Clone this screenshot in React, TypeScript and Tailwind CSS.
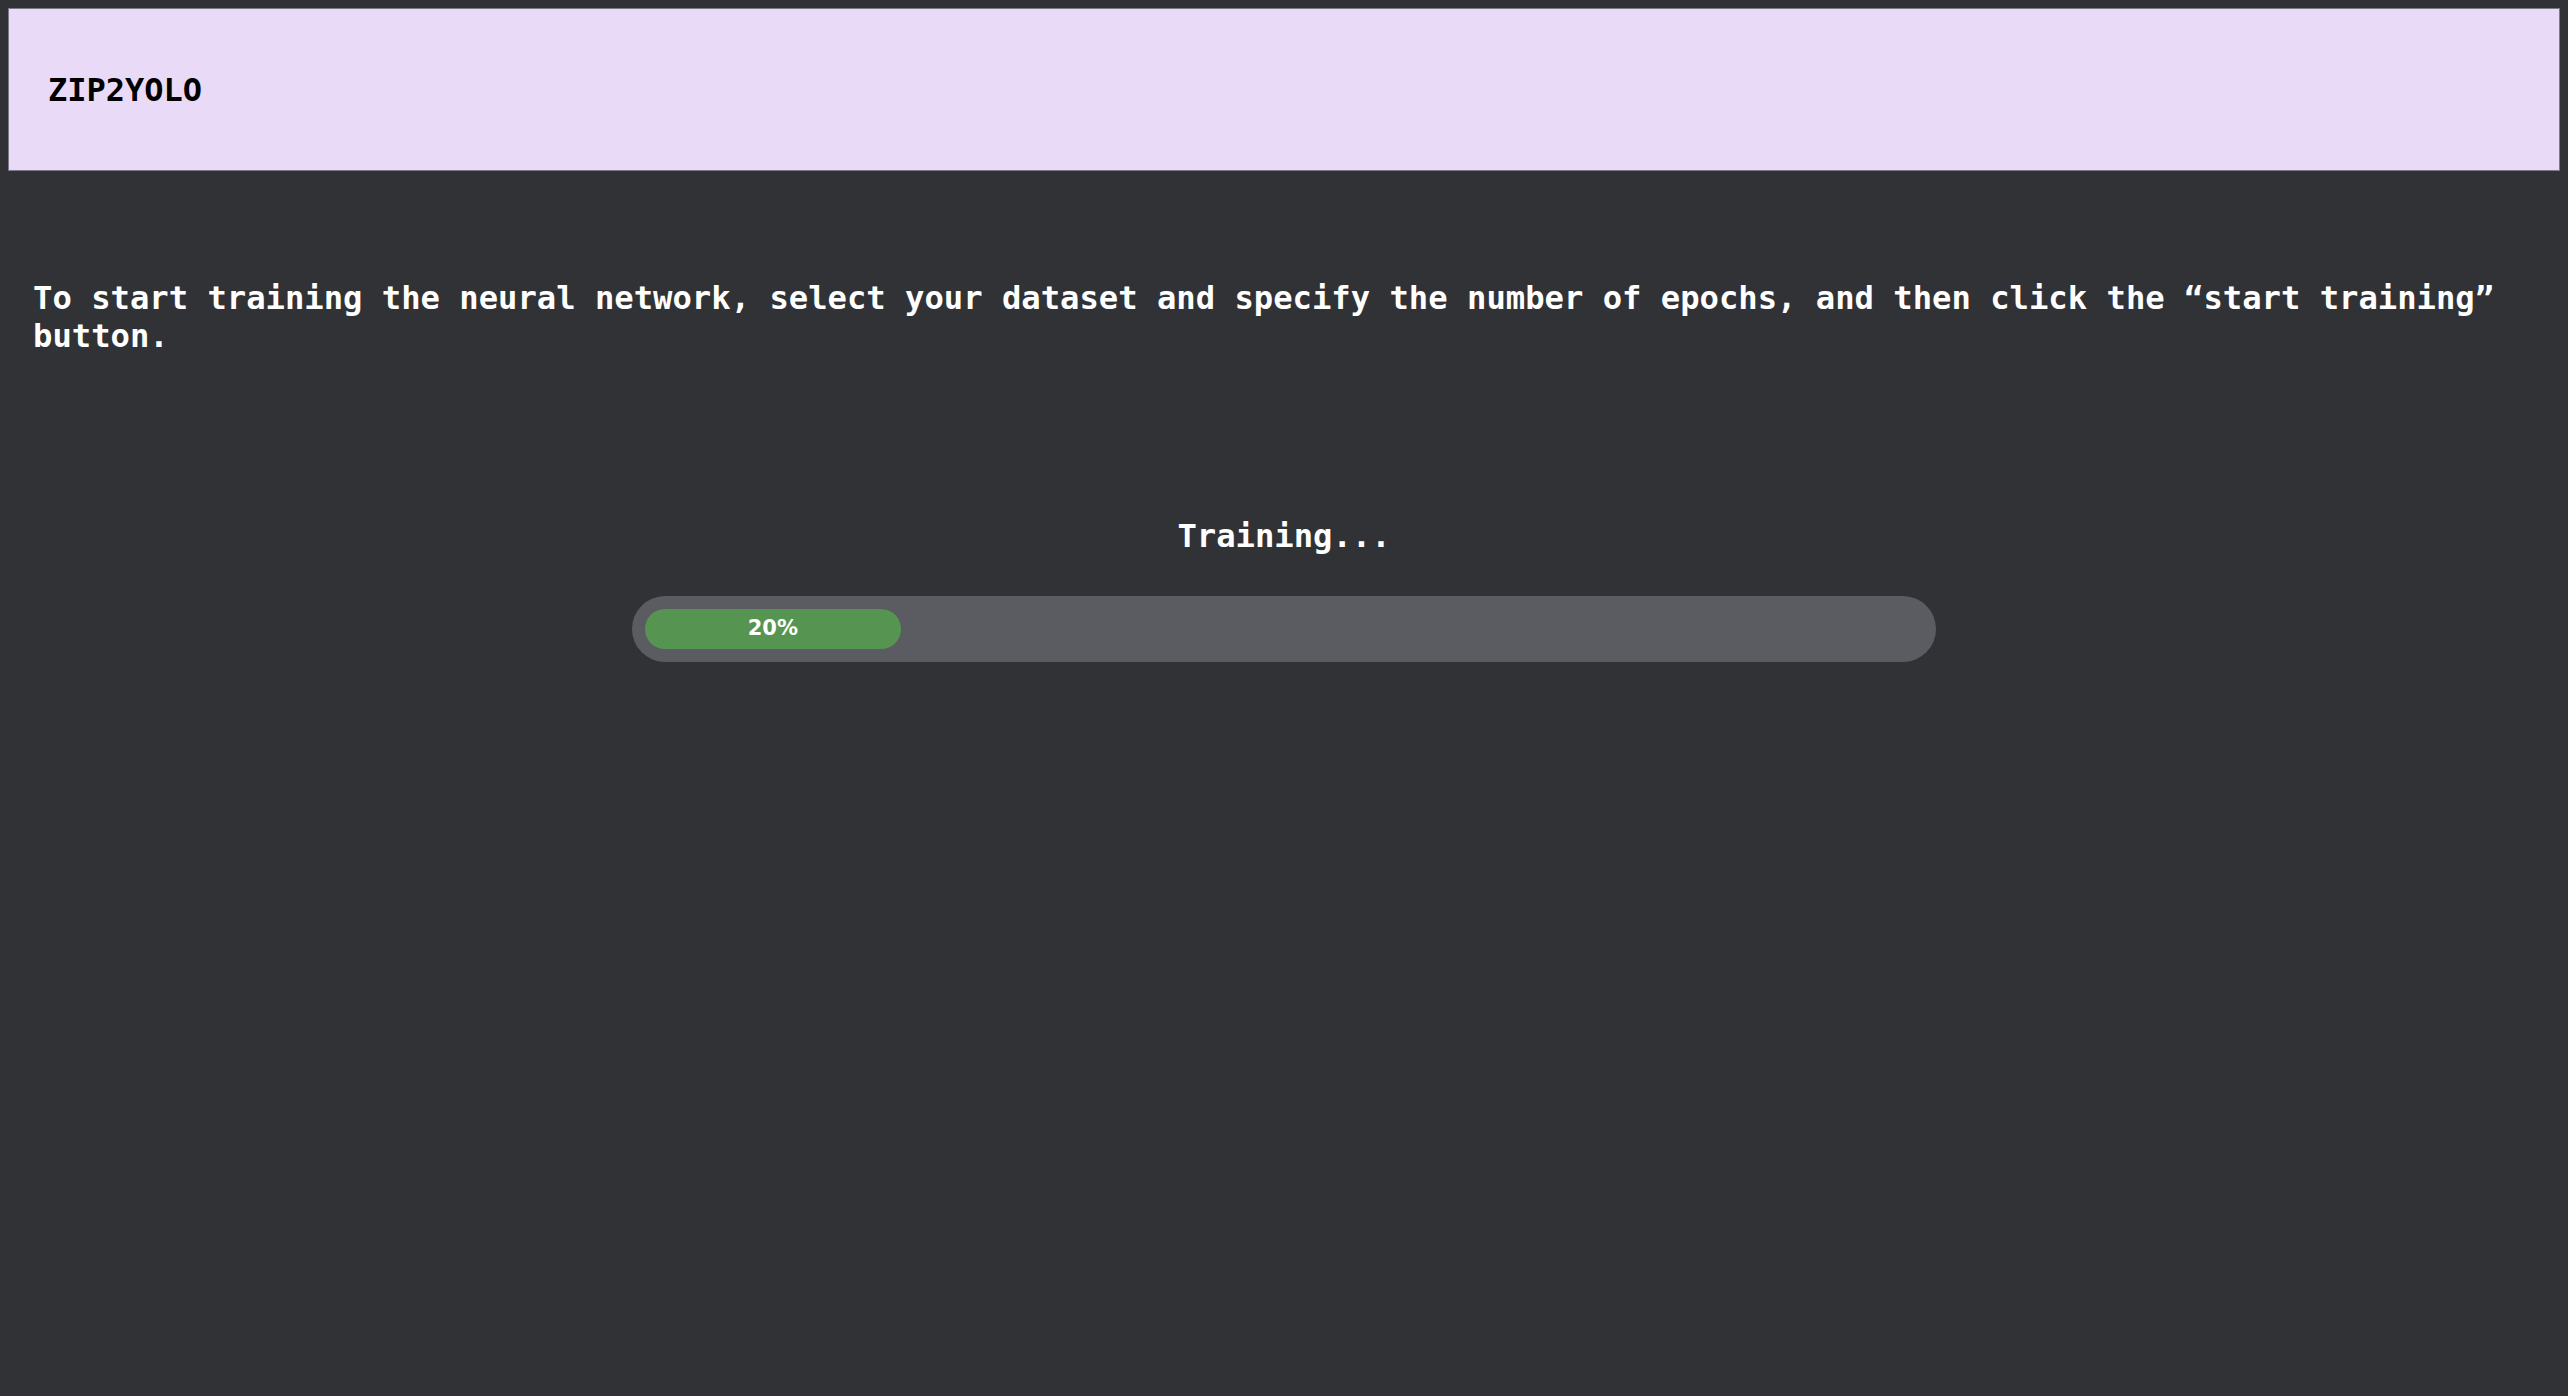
export default function App() {
  const progress = 20

  return (
    <div className="min-h-screen bg-[#313236] p-[8px] font-['DejaVu_Sans_Mono',monospace] font-bold">
      <header className="flex h-[163px] items-center border border-[#7c7a86] bg-[#e9daf8] pl-[39px]">
        <h1 className="text-[32px] leading-[38px] text-black">ZIP2YOLO</h1>
      </header>

      <p className="mt-[109px] px-[25px] text-[32.2px] leading-[37.5px] text-white">
        To start training the neural network, select your dataset and specify the number of epochs, and then click the
        “start training” button.
      </p>

      <div className="mt-[163px] flex flex-col items-center">
        <h2 className="text-[32.2px] leading-[37.5px] text-white">Training...</h2>
        <div className="mt-[40px] w-[1304px] rounded-full bg-[#5b5c61] p-[13px]">
          <div
            className="flex h-[40px] items-center justify-center rounded-full bg-[#569451] font-['DejaVu_Sans',sans-serif] text-[21px] leading-none text-white"
            style={{ width: `${progress}%` }}
          >
            {progress}%
          </div>
        </div>
      </div>
    </div>
  )
}
